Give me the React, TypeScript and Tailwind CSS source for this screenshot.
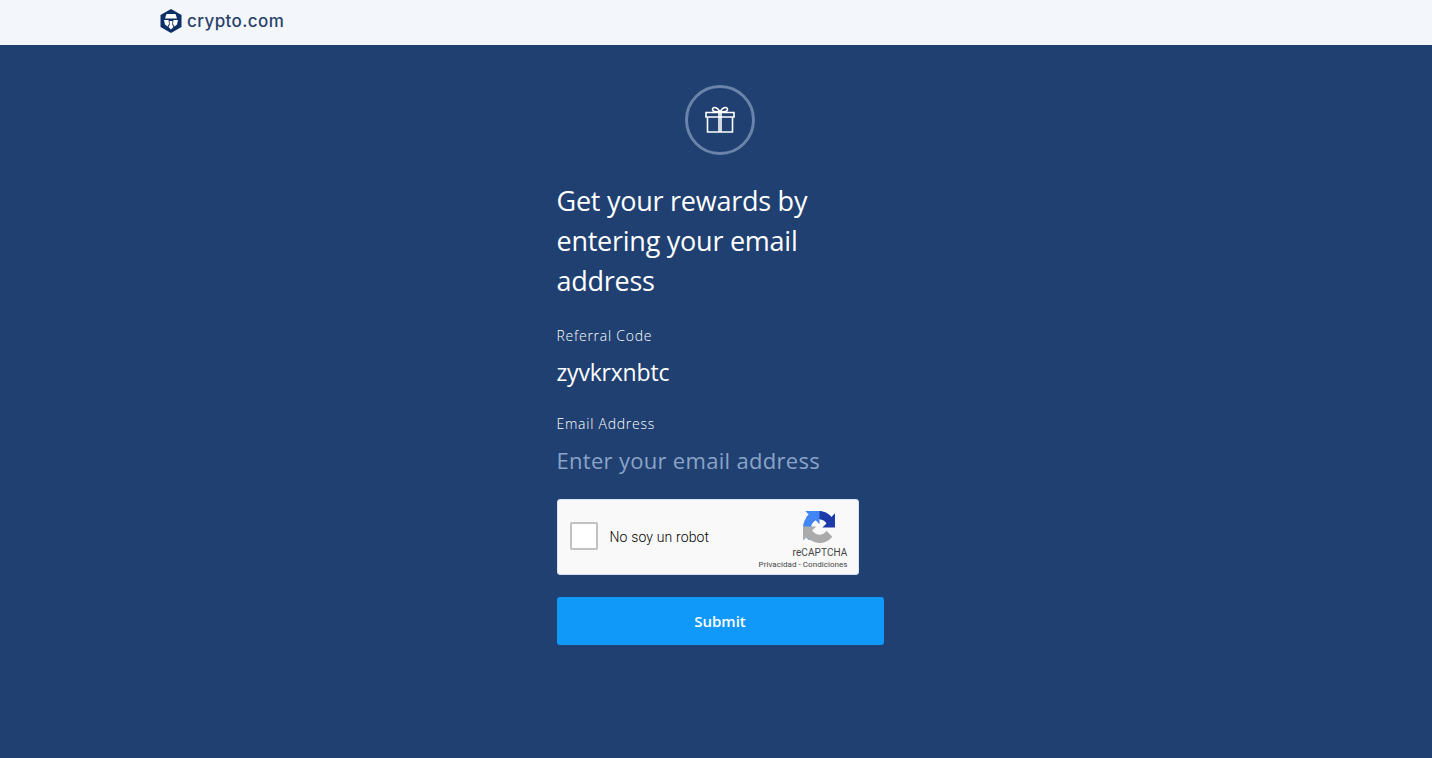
export default function App() {
  return (
    <div className="min-h-[758px] flex flex-col bg-[#1f4071] font-['Open_Sans',sans-serif]">
      <header className="h-[45px] bg-[#f3f6fb] flex items-center pl-[160px] pb-[3px] gap-[5px] shrink-0">
        <svg width="22" height="24" viewBox="0 0 22 24">
          <path d="M11 0 L21.5 6 V18 L11 24 L0.5 18 V6 Z" fill="#0c2f66" />
          <path d="M6.5 5 H15.5 L17 9.5 H5 Z" fill="#fff" />
          <path d="M4 11 L8.5 11 L9 15 L7.5 17.5 L5 15.5 Z" fill="#fff" />
          <path d="M18 11 L13.5 11 L13 15 L14.5 17.5 L17 15.5 Z" fill="#fff" />
          <path d="M9.5 12 H12.5 L12.2 15.5 L13.5 18 L11 20.5 L8.5 18 L9.8 15.5 Z" fill="#fff" />
        </svg>
        <span className="text-[17px] leading-none font-medium text-[#29426b] font-['Inter',sans-serif] tracking-[0.4px]">crypto.com</span>
      </header>
      <main className="flex-1 flex flex-col items-center pt-[40px] pl-[8px]">
        <div className="w-[70px] h-[70px] rounded-full border-[3px] border-[#6a83a8] flex items-center justify-center">
          <svg width="32" height="28" viewBox="0 0 32 28" fill="none" stroke="#fff" strokeWidth="1.6">
            <path d="M2 6.5 H30 V11 H2 Z" />
            <path d="M3.5 11 V26 H28.5 V11" />
            <path d="M15 6.5 V26 M17 6.5 V26" />
            <path d="M16 6 C13 0.5 8.5 0.5 8.5 3.5 C8.5 6 12 6 16 6 C20 6 23.5 6 23.5 3.5 C23.5 0.5 19 0.5 16 6 Z" />
          </svg>
        </div>
        <form className="w-[327px] mt-[26px] text-white">
          <h1 className="text-[27px] leading-[40px] font-normal tracking-[-0.25px] w-[280px]">Get your rewards by entering your email address</h1>
          <div className="mt-[25px] text-[14px] leading-[20px] font-light tracking-[0.75px]">Referral Code</div>
          <div className="mt-[11px] text-[23px] leading-[30px] font-normal tracking-[-0.2px]">zyvkrxnbtc</div>
          <div className="mt-[27px] text-[14px] leading-[20px] font-light tracking-[0.75px]">Email Address</div>
          <div className="mt-[11px] text-[22px] leading-[30px] font-normal text-[#8ba3c7] tracking-[0.3px]">Enter your email address</div>
          <div className="mt-[24px] w-[302px] h-[76px] bg-[#f9f9f9] rounded-[3px] border border-[#d6e2f2] flex items-center font-['Roboto',sans-serif] text-black">
            <div className="ml-[12px] mb-[2px] w-[28px] h-[28px] bg-white border-2 border-[#c1c1c1] rounded-[2px]" />
            <span className="ml-[12px] text-[14px] font-light tracking-[0.15px]">No soy un robot</span>
            <div className="ml-auto mr-[10px] flex flex-col items-end mt-[6px]">
              <svg width="32" height="32" viewBox="0 0 64 64" className="mr-[13px]">
                <path d="M64 31.955l-.033-1.37V4.687l-7.16 7.16C50.948 4.674 42.033.093 32.05.093c-10.4 0-19.622 4.96-25.458 12.64l11.736 11.86a15.55 15.55 0 0 1 4.754-5.334c2.05-1.6 4.952-2.906 8.968-2.906.485 0 .86.057 1.135.163 5.808.46 10.844 3.663 13.81 8.312l-8.307 8.308c10.522-.04 22.4-.066 27.295.003" fill="#1c3aa9" />
                <path d="M31.862.094l-1.37.033H4.594l7.16 7.16C4.58 14.005 0 22.92 0 32.903c0 10.4 4.96 19.622 12.64 25.458L24.5 46.625a15.55 15.55 0 0 1-5.334-4.754c-1.6-2.05-2.906-4.952-2.906-8.968 0-.485.057-.86.163-1.135.46-5.808 3.663-10.844 8.312-13.81l8.308 8.307c-.04-10.522-.066-22.4.003-27.295" fill="#4285f4" />
                <path d="M.001 32.045l.033 1.37v25.898l7.16-7.16c7.017 7.173 15.932 11.754 25.915 11.754 10.4 0 19.622-4.96 25.458-12.64L46.831 39.408a15.55 15.55 0 0 1-4.754 5.334c-2.05 1.6-4.952 2.906-8.968 2.906-.485 0-.86-.057-1.135-.163-5.808-.46-10.844-3.663-13.81-8.312l8.307-8.308C16 30.905 4.9 30.93.001 30.86" fill="#ababab" />
              </svg>
              <span className="text-[10px] leading-[12px] mt-[4px] text-[#444] tracking-[0.1px]">reCAPTCHA</span>
              <span className="text-[8px] leading-[10px] mt-[1px] text-[#444] tracking-[0.05px]">Privacidad - Condiciones</span>
            </div>
          </div>
          <button type="button" className="mt-[22px] w-[327px] h-[48px] rounded-[3px] bg-[#1199fa] text-white text-[15px] font-semibold">Submit</button>
        </form>
      </main>
    </div>
  );
}
